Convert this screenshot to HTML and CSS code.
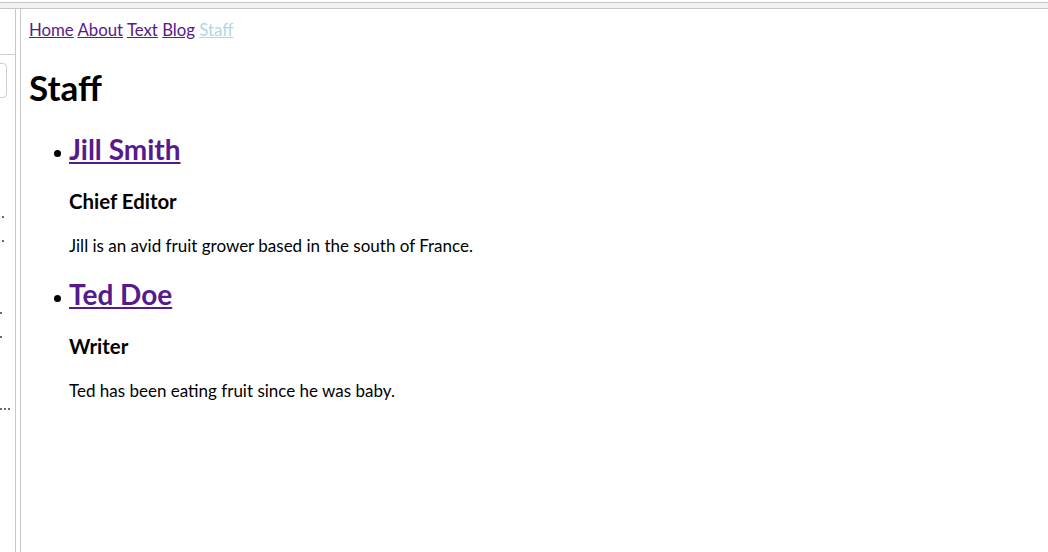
FILE: index.html
```html
<!DOCTYPE html>
<html>
<head>
<meta charset="utf-8">
<title>Staff</title>
<link rel="stylesheet" href="styles.css">
</head>
<body>
<div class="topbar"></div>
<div class="frame">
  <aside class="side">
    <div class="side-rule"></div>
    <div class="side-box"></div>
    <div class="side-dots">
      <span class="dot d1"></span>
      <span class="dot d2"></span>
      <span class="dot d3"></span>
      <span class="dot d4"></span>
      <span class="ellipsis"><i class="dot"></i><i class="dot"></i><i class="dot"></i></span>
    </div>
  </aside>
  <main class="main">
    <nav class="nav">
      <a href="#" class="visited">Home</a>
      <a href="#" class="visited">About</a>
      <a href="#" class="visited">Text</a>
      <a href="#" class="visited">Blog</a>
      <a href="#" class="current">Staff</a>
    </nav>
    <h1 class="title">Staff</h1>
    <ul class="staff">
      <li class="member">
        <h2 class="name"><a href="#" class="visited">Jill Smith</a></h2>
        <h3 class="role">Chief Editor</h3>
        <p class="bio">Jill is an avid fruit grower based in the south of France.</p>
      </li>
      <li class="member">
        <h2 class="name"><a href="#" class="visited">Ted Doe</a></h2>
        <h3 class="role">Writer</h3>
        <p class="bio">Ted has been eating fruit since he was baby.</p>
      </li>
    </ul>
  </main>
</div>
</body>
</html>
```
FILE: styles.css
```css
html, body {
  margin: 0;
  padding: 0;
  height: 100%;
  background: #fff;
}
body {
  display: flex;
  flex-direction: column;
  font-family: Lato, "Open Sans", sans-serif;
  font-size: 16.8px;
  color: #000;
}
.topbar {
  flex: none;
  margin-top: 2px;
  height: 5px;
  background: #f1f1f1;
  border-top: 1px solid #c6c6c6;
  border-bottom: 1px solid #c6c6c6;
}
.frame {
  flex: 1;
  display: flex;
  min-height: 0;
}
.side {
  flex: none;
  width: 15px;
  border-right: 1px solid #c8c8c8;
  display: flex;
  flex-direction: column;
  overflow: hidden;
}
.side-rule {
  margin-top: 45px;
  height: 1px;
  background: #cfcfcf;
}
.side-box {
  margin: 8px 0 0 -10px;
  width: 15px;
  height: 33px;
  border: 1px solid #cfcfcf;
  border-radius: 4px;
}
.side-dots {
  display: flex;
  flex-direction: column;
  align-items: flex-start;
}
.dot {
  display: block;
  width: 2px;
  height: 2px;
  background: #6a6a6a;
}
.d1 { margin: 118px 0 0 2px; }
.d2 { margin: 22px 0 0 2px; }
.d3 { margin: 70px 0 0 0; }
.d4 { margin: 22px 0 0 0; }
.ellipsis {
  display: flex;
  gap: 2px;
  margin-top: 70px;
}
.main {
  flex: 1;
  margin-left: 4px;
  border-left: 1px solid #c8c8c8;
  padding: 11px 8px 0;
}
.nav {
  line-height: 20px;
}
a.visited { color: #551a8b; }
a.current { color: #add8e6; }
.title {
  font-size: 35px;
  line-height: 40px;
  font-weight: 700;
  margin: 27px 0 25px;
}
.staff {
  margin: 0;
  padding-left: 40px;
  list-style: none;
}
.member {
  position: relative;
}
.member::before {
  content: "";
  position: absolute;
  left: -15px;
  top: 18px;
  width: 7px;
  height: 7px;
  border-radius: 50%;
  background: #000;
}
.name {
  font-size: 28px;
  line-height: 34px;
  font-weight: 700;
  margin: 21px 0 23px;
}
.role {
  font-size: 20.4px;
  line-height: 24px;
  font-weight: 700;
  margin: 23px 0 23px;
}
.bio {
  font-size: 17px;
  line-height: 20px;
  margin: 23px 0 0;
}
```
